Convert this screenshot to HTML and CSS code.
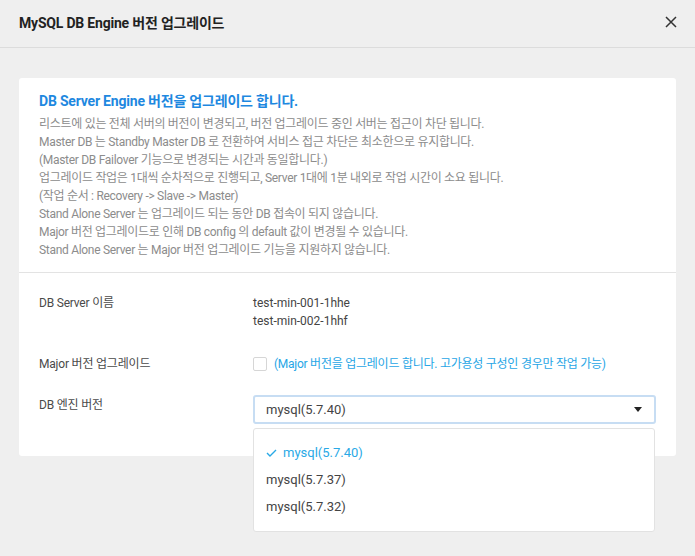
FILE: index.html
```html
<!DOCTYPE html>
<html lang="ko">
<head>
    <meta charset="UTF-8">
    <meta name="viewport" content="width=device-width, initial-scale=1.0">
    <title>MySQL DB Engine 버전 업그레이드</title>
    <link rel="stylesheet" href="styles.css">
</head>
<body>
    <div class="modal">
        <header class="modal-header">
            <h2>MySQL DB Engine 버전 업그레이드</h2>
            <span class="close">
                <svg width="12" height="12" viewBox="0 0 12 12"><path d="M1 1L11 11M11 1L1 11" stroke="#333" stroke-width="1.5"/></svg>
            </span>
        </header>

        <div class="modal-body">
            <div class="card">
                <div class="notice">
                    <h3>DB Server Engine 버전을 업그레이드 합니다.</h3>
                    <p>리스트에 있는 전체 서버의 버전이 변경되고, 버전 업그레이드 중인 서버는 접근이 차단 됩니다.</p>
                    <p>Master DB 는 Standby Master DB 로 전환하여 서비스 접근 차단은 최소한으로 유지합니다.</p>
                    <p>(Master DB Failover 기능으로 변경되는 시간과 동일합니다.)</p>
                    <p>업그레이드 작업은 1대씩 순차적으로 진행되고, Server 1대에 1분 내외로 작업 시간이 소요 됩니다.</p>
                    <p>(작업 순서 : Recovery -&gt; Slave -&gt; Master)</p>
                    <p>Stand Alone Server 는 업그레이드 되는 동안 DB 접속이 되지 않습니다.</p>
                    <p>Major 버전 업그레이드로 인해 DB config 의 default 값이 변경될 수 있습니다.</p>
                    <p>Stand Alone Server 는 Major 버전 업그레이드 기능을 지원하지 않습니다.</p>
                </div>

                <div class="form">
                    <div class="form-row row-servers">
                        <div class="form-label">DB Server 이름</div>
                        <div class="form-value">
                            <div>test-min-001-1hhe</div>
                            <div>test-min-002-1hhf</div>
                        </div>
                    </div>
                    <div class="form-row row-major">
                        <div class="form-label">Major 버전 업그레이드</div>
                        <div class="form-value check-line">
                            <span class="checkbox"></span>
                            <span class="check-text">(Major 버전을 업그레이드 합니다. 고가용성 구성인 경우만 작업 가능)</span>
                        </div>
                    </div>
                    <div class="form-row row-engine">
                        <div class="form-label">DB 엔진 버전</div>
                        <div class="form-value select-wrap">
                            <div class="select">
                                <span>mysql(5.7.40)</span>
                                <span class="caret"></span>
                            </div>
                            <ul class="dropdown">
                                <li class="selected">
                                    <svg width="11" height="8" viewBox="0 0 11 8"><path d="M1 4L4 7L10 1" fill="none" stroke="#29a9e6" stroke-width="1.4"/></svg>
                                    mysql(5.7.40)
                                </li>
                                <li>mysql(5.7.37)</li>
                                <li>mysql(5.7.32)</li>
                            </ul>
                        </div>
                    </div>
                </div>
            </div>
        </div>
    </div>
</body>
</html>
```

FILE: styles.css
```css
/* General Styling */
body {
    margin: 0;
    padding: 0;
    font-family: Roboto, "Noto Sans CJK KR", sans-serif;
    background-color: #efefef;
    color: #333;
}

.modal {
    width: 695px;
    height: 556px;
    background-color: #efefef;
}

.modal-header {
    display: flex;
    justify-content: space-between;
    align-items: center;
    height: 48px;
    padding: 0 18px 4px 19px;
    border-bottom: 1px solid #dcdcdc;
    box-sizing: border-box;
}

.modal-header h2 {
    margin: 0;
    font-size: 14px;
    font-weight: 700;
    letter-spacing: -0.2px;
    color: #222;
}

.close {
    display: flex;
    cursor: pointer;
}

.modal-body {
    padding: 30px 19px 0 19px;
}

.card {
    background-color: #fff;
    border-radius: 3px;
    width: 657px;
}

/* Notice */
.notice {
    padding: 13px 20px 13px 20px;
    border-bottom: 1px solid #e3e3e3;
}

.notice h3 {
    margin: 0 0 4px 0;
    font-size: 14px;
    line-height: 20px;
    font-weight: 700;
    letter-spacing: -0.2px;
    color: #1e88e0;
}

.notice p {
    margin: 0;
    font-size: 12px;
    line-height: 18px;
    letter-spacing: -0.3px;
    color: #8c8c8c;
}

/* Form */
.form {
    padding: 21px 20px 32px 20px;
}

.form-row {
    display: flex;
    font-size: 12px;
    line-height: 18px;
}

.form-label {
    width: 214px;
    flex-shrink: 0;
    letter-spacing: -0.2px;
    color: #4a4a4a;
}

.form-value {
    color: #444;
}

.row-major {
    margin-top: 25px;
}

.row-engine {
    margin-top: 23px;
}

.check-line {
    display: flex;
    align-items: center;
    gap: 7px;
}

.checkbox {
    width: 12px;
    height: 12px;
    border: 1px solid #d6d6d6;
    border-radius: 2px;
}

.check-text {
    letter-spacing: -0.25px;
    color: #27a6e6;
}

.select-wrap {
    position: relative;
    flex: 1;
    margin-top: -1px;
}

.select {
    display: flex;
    justify-content: space-between;
    align-items: center;
    height: 29px;
    box-sizing: border-box;
    padding: 0 12px 0 11px;
    border: 2px solid #c7ddf3;
    border-radius: 3px;
    font-size: 13px;
    color: #444;
}

.caret {
    width: 0;
    height: 0;
    border-left: 4px solid transparent;
    border-right: 4px solid transparent;
    border-top: 5px solid #222;
}

.dropdown {
    position: absolute;
    top: 33px;
    left: 0;
    width: 402px;
    margin: 0;
    padding: 10px 0 11px 0;
    list-style: none;
    background-color: #fff;
    border: 1px solid #e2e2e2;
    border-radius: 3px;
    box-sizing: border-box;
}

.dropdown li {
    display: flex;
    align-items: center;
    gap: 6px;
    height: 27px;
    padding-left: 12px;
    font-size: 13px;
    color: #444;
}

.dropdown li.selected {
    color: #29a9e6;
}
```
